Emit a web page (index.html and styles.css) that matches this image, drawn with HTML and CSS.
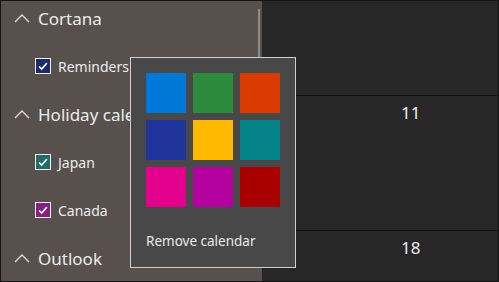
FILE: index.html
```html
<html lang="en">

<head>
    <meta charset="UTF-8">
    <meta name="viewport" content="width=device-width, initial-scale=1.0">
    <title>Calendars</title>

    <link rel="stylesheet" href="styles.css">
</head>

<body>
    <div class="frame">
        <div class="sidebar">
            <div class="calList">
                <div class="groupRow">
                    <svg class="chevron" viewBox="0 0 16 9"><polyline points="1,8 8,1 15,8" /></svg>
                    <span>Cortana</span>
                </div>
                <div class="calRow">
                    <span class="check check-navy">
                        <svg viewBox="0 0 16 16"><polyline points="3.5,8.5 6.5,11.5 12.5,4.5" /></svg>
                    </span>
                    <span>Reminders</span>
                </div>
                <div class="groupRow">
                    <svg class="chevron" viewBox="0 0 16 9"><polyline points="1,8 8,1 15,8" /></svg>
                    <span>Holiday calendars</span>
                </div>
                <div class="calRow">
                    <span class="check check-teal">
                        <svg viewBox="0 0 16 16"><polyline points="3.5,8.5 6.5,11.5 12.5,4.5" /></svg>
                    </span>
                    <span>Japan</span>
                </div>
                <div class="calRow">
                    <span class="check check-purple">
                        <svg viewBox="0 0 16 16"><polyline points="3.5,8.5 6.5,11.5 12.5,4.5" /></svg>
                    </span>
                    <span>Canada</span>
                </div>
                <div class="groupRow">
                    <svg class="chevron" viewBox="0 0 16 9"><polyline points="1,8 8,1 15,8" /></svg>
                    <span>Outlook</span>
                </div>
            </div>
            <div class="scrollThumb"></div>
        </div>

        <div class="monthView">
            <div class="dayCell dayCell-top"></div>
            <div class="dayCell dayCell-mid"><span class="dayNum">11</span></div>
            <div class="dayCell"><span class="dayNum">18</span></div>
        </div>

        <!-- colour picker flyout -->
        <div class="colorFlyout">
            <div class="swatchGrid">
                <div class="swatch" style="background-color: #0078d7;"></div>
                <div class="swatch" style="background-color: #2b8a3c;"></div>
                <div class="swatch" style="background-color: #da3b01;"></div>
                <div class="swatch" style="background-color: #20349c;"></div>
                <div class="swatch" style="background-color: #ffb900;"></div>
                <div class="swatch" style="background-color: #038387;"></div>
                <div class="swatch" style="background-color: #e3008c;"></div>
                <div class="swatch" style="background-color: #b4009e;"></div>
                <div class="swatch" style="background-color: #a80000;"></div>
            </div>
            <div class="flyoutItem">Remove calendar</div>
        </div>
    </div>
</body>

</html>
```

FILE: styles.css
```css
body {
    margin: 0;
    background-color: #111;
    font-family: "Noto Sans", "Open Sans", sans-serif;
    color: #ececec;
}

.frame {
    position: relative;
    width: 499px;
    height: 282px;
    box-sizing: border-box;
    border: 1px solid #141414;
    display: flex;
    overflow: hidden;
}

.sidebar {
    position: relative;
    width: 261px;
    height: 100%;
    background-color: #57504d;
    overflow: hidden;
}

.calList {
    margin-top: -7px;
}

.groupRow {
    height: 48px;
    display: flex;
    align-items: center;
    padding-left: 13px;
    font-size: 17px;
    white-space: nowrap;
}

.chevron {
    width: 16px;
    height: 9px;
    margin-right: 8px;
    fill: none;
    stroke: #dcdcdc;
    stroke-width: 1.3;
}

.calRow {
    height: 48px;
    display: flex;
    align-items: center;
    padding-left: 34px;
    font-size: 14px;
    white-space: nowrap;
}

.check {
    width: 16px;
    height: 16px;
    box-sizing: border-box;
    border: 1px solid #f0f0f0;
    margin-right: 7px;
    display: flex;
}

.check svg {
    width: 14px;
    height: 14px;
    fill: none;
    stroke: #fff;
    stroke-width: 1.8;
}

.check-navy {
    background-color: #1d2a6b;
}

.check-teal {
    background-color: #226b67;
}

.check-purple {
    background-color: #86207f;
}

.scrollThumb {
    position: absolute;
    left: 257px;
    top: 8px;
    width: 2px;
    height: 80px;
    background-color: #8e8a88;
}

.monthView {
    flex-grow: 1;
    background-color: #272727;
    display: flex;
    flex-direction: column;
}

.dayCell {
    border-bottom: 1px solid #0e0e0e;
    padding: 7px 0 0 139px;
    box-sizing: border-box;
    font-size: 17px;
    line-height: 20px;
}

.dayCell-top {
    height: 95px;
}

.dayCell-mid {
    height: 135px;
}

.dayCell:last-child {
    border-bottom: none;
    flex-grow: 1;
}

.colorFlyout {
    position: absolute;
    left: 129px;
    top: 56px;
    width: 166px;
    height: 211px;
    box-sizing: border-box;
    background-color: #484848;
    border: 1px solid #cfcfcf;
    padding: 15px 0 0 15px;
}

.swatchGrid {
    display: grid;
    grid-template-columns: repeat(3, 40px);
    grid-auto-rows: 40px;
    gap: 7px;
}

.flyoutItem {
    margin-top: 25px;
    font-size: 13.5px;
    color: #eaeaea;
}
```
